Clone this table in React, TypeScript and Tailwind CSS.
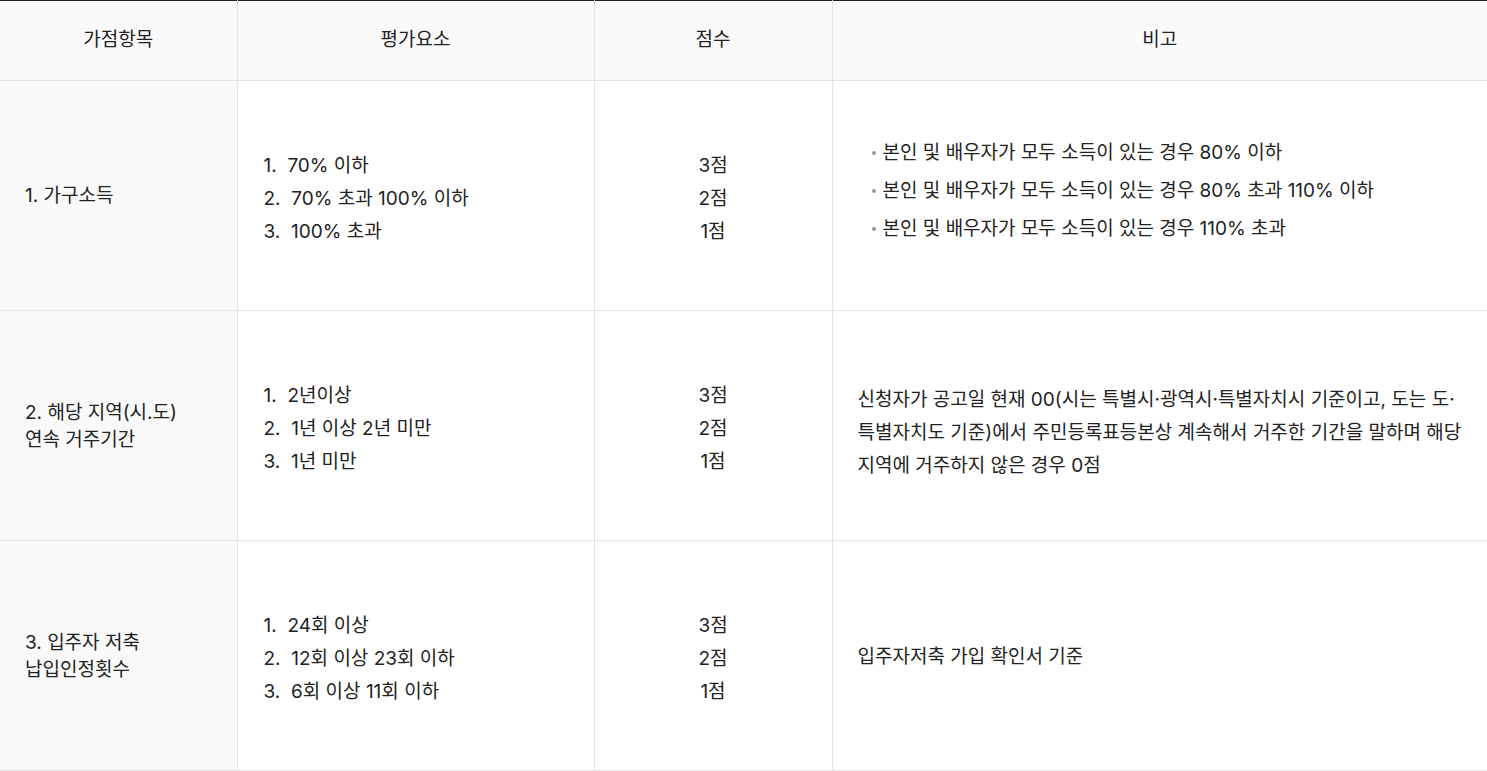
import React from "react";

const font = { fontFamily: 'Inter, "Noto Sans CJK KR", "Noto Sans", sans-serif' };

function Cell({
  children,
  first,
  center,
  last,
}: {
  children: React.ReactNode;
  first?: boolean;
  center?: boolean;
  last?: boolean;
}) {
  return (
    <td
      className={
        "border border-[#e4e4e4] align-middle px-[25px] " +
        (first ? "bg-[#f9f9f9] border-l-0 " : "bg-white pt-[6px] ") +
        (last ? "border-r-0 " : "") +
        (center ? "text-center " : "text-left ")
      }
    >
      {children}
    </td>
  );
}

function Lines({ items }: { items: string[] }) {
  return (
    <div className="flex flex-col">
      {items.map((t, i) => (
        <div key={i} className="whitespace-pre leading-[33px]">
          {t}
        </div>
      ))}
    </div>
  );
}

export default function App() {
  return (
    <div className="w-[1487px] bg-white text-[#222] text-[19px]" style={font}>
      <table className="w-full border-collapse table-fixed border-t border-t-[#222]">
        <colgroup>
          <col className="w-[237px]" />
          <col className="w-[357px]" />
          <col className="w-[238px]" />
          <col />
        </colgroup>
        <thead>
          <tr className="h-[80px] bg-[#fafafa]">
            {["가점항목", "평가요소", "점수", "비고"].map((h, i) => (
              <th
                key={h}
                className={
                  "border border-[#e4e4e4] border-t-[#222] font-normal text-center align-middle " +
                  (i === 0 ? "border-l-0 " : "") +
                  (i === 3 ? "border-r-0" : "")
                }
              >
                {h}
              </th>
            ))}
          </tr>
        </thead>
        <tbody>
          <tr className="h-[230px]">
            <Cell first>
              <div className="leading-[27px]">1. 가구소득</div>
            </Cell>
            <Cell>
              <div className="pl-px">
                <Lines items={["1.  70% 이하", "2.  70% 초과 100% 이하", "3.  100% 초과"]} />
              </div>
            </Cell>
            <Cell center>
              <Lines items={["3점", "2점", "1점"]} />
            </Cell>
            <td className="border border-[#e4e4e4] border-r-0 align-middle pt-[6px] pl-[39px] pr-[25px]">
              <ul className="flex flex-col gap-[5px] -mt-[16px]">
                {[
                  "본인 및 배우자가 모두 소득이 있는 경우 80% 이하",
                  "본인 및 배우자가 모두 소득이 있는 경우 80% 초과 110% 이하",
                  "본인 및 배우자가 모두 소득이 있는 경우 110% 초과",
                ].map((t) => (
                  <li key={t} className="flex items-center leading-[33px]">
                    <span className="w-[4px] h-[4px] rounded-full bg-[#999] mr-[7px] shrink-0" />
                    <span>{t}</span>
                  </li>
                ))}
              </ul>
            </td>
          </tr>
          <tr className="h-[230px]">
            <Cell first>
              <div className="leading-[27px]">
                2. 해당 지역(시.도)
                <br />
                연속 거주기간
              </div>
            </Cell>
            <Cell>
              <div className="pl-px">
                <Lines items={["1.  2년이상", "2.  1년 이상 2년 미만", "3.  1년 미만"]} />
              </div>
            </Cell>
            <Cell center>
              <Lines items={["3점", "2점", "1점"]} />
            </Cell>
            <Cell last>
              <div className="leading-[33px] pt-[8px] whitespace-nowrap">
                신청자가 공고일 현재 00(시는 특별시·광역시·특별자치시 기준이고, 도는 도·
                <br />
                특별자치도 기준)에서 주민등록표등본상 계속해서 거주한 기간을 말하며 해당
                <br />
                지역에 거주하지 않은 경우 0점
              </div>
            </Cell>
          </tr>
          <tr className="h-[230px]">
            <Cell first>
              <div className="leading-[27px]">
                3. 입주자 저축
                <br />
                납입인정횟수
              </div>
            </Cell>
            <Cell>
              <div className="pl-px">
                <Lines items={["1.  24회 이상", "2.  12회 이상 23회 이하", "3.  6회 이상 11회 이하"]} />
              </div>
            </Cell>
            <Cell center>
              <Lines items={["3점", "2점", "1점"]} />
            </Cell>
            <Cell last>
              <div className="leading-[33px] -mt-[4px]">입주자저축 가입 확인서 기준</div>
            </Cell>
          </tr>
        </tbody>
      </table>
    </div>
  );
}
